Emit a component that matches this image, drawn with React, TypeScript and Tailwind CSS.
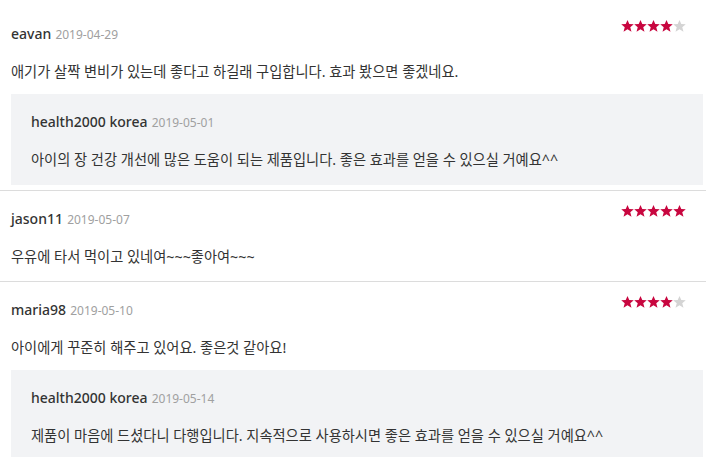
import React from "react";

interface Reply {
  author: string;
  date: string;
  text: string;
}

interface Review {
  author: string;
  date: string;
  rating: number;
  text: string;
  reply?: Reply;
}

const reviews: Review[] = [
  {
    author: "eavan",
    date: "2019-04-29",
    rating: 4,
    text: "애기가 살짝 변비가 있는데 좋다고 하길래 구입합니다. 효과 봤으면 좋겠네요.",
    reply: {
      author: "health2000 korea",
      date: "2019-05-01",
      text: "아이의 장 건강 개선에 많은 도움이 되는 제품입니다. 좋은 효과를 얻을 수 있으실 거예요^^",
    },
  },
  {
    author: "jason11",
    date: "2019-05-07",
    rating: 5,
    text: "우유에 타서 먹이고 있네여~~~좋아여~~~",
  },
  {
    author: "maria98",
    date: "2019-05-10",
    rating: 4,
    text: "아이에게 꾸준히 해주고 있어요. 좋은것 같아요!",
    reply: {
      author: "health2000 korea",
      date: "2019-05-14",
      text: "제품이 마음에 드셨다니 다행입니다. 지속적으로 사용하시면 좋은 효과를 얻을 수 있으실 거예요^^",
    },
  },
];

function Star({ filled }: { filled: boolean }) {
  return (
    <svg width="13" height="12" viewBox="0 0 24 23" className="block">
      <polygon
        points="12,0 15.4,7.7 24,8.2 17.3,13.8 19.6,22.5 12,17.6 4.4,22.5 6.7,13.8 0,8.2 8.6,7.7"
        fill={filled ? "#c8063f" : "#d4d4d4"}
      />
    </svg>
  );
}

function Stars({ rating }: { rating: number }) {
  return (
    <div className="flex h-[12px] mr-[17px]">
      {[1, 2, 3, 4, 5].map((i) => (
        <Star key={i} filled={i <= rating} />
      ))}
    </div>
  );
}

function Author({ name, date }: { name: string; date: string }) {
  return (
    <div className="leading-[20px]">
      <span className="text-[14px] font-medium text-[#333]">{name}</span>{" "}
      <span className="text-[12px] text-[#a0a0a0]">{date}</span>
    </div>
  );
}

function ReviewItem({ review }: { review: Review }) {
  return (
    <div className={`pl-[11px] pr-[3px] pt-[14px] ${review.reply ? "pb-[5px]" : "pb-[14px]"}`}>
      <div className="flex justify-between items-start">
        <div className="pt-[3px]">
          <Author name={review.author} date={review.date} />
        </div>
        <Stars rating={review.rating} />
      </div>
      <p className="mt-[17px] text-[14.25px] leading-[20px] text-[#333]">{review.text}</p>

      {review.reply && (
        <div className="mt-[12px] bg-[#f2f3f5] px-[20px] pt-[17px] pb-[15px]">
          <Author name={review.reply.author} date={review.reply.date} />
          <p className="mt-[17px] text-[14.25px] leading-[20px] text-[#333]">{review.reply.text}</p>
        </div>
      )}
    </div>
  );
}

export default function App() {
  return (
    <div
      className="w-[706px] h-[457px] overflow-hidden bg-white pt-[6px]"
      style={{ fontFamily: '"Noto Sans", "Noto Sans CJK KR", sans-serif' }}
    >
      {reviews.map((review, idx) => (
        <div key={review.author} className={idx > 0 ? "border-t border-[#dcdcdc]" : ""}>
          <ReviewItem review={review} />
        </div>
      ))}
    </div>
  );
}
